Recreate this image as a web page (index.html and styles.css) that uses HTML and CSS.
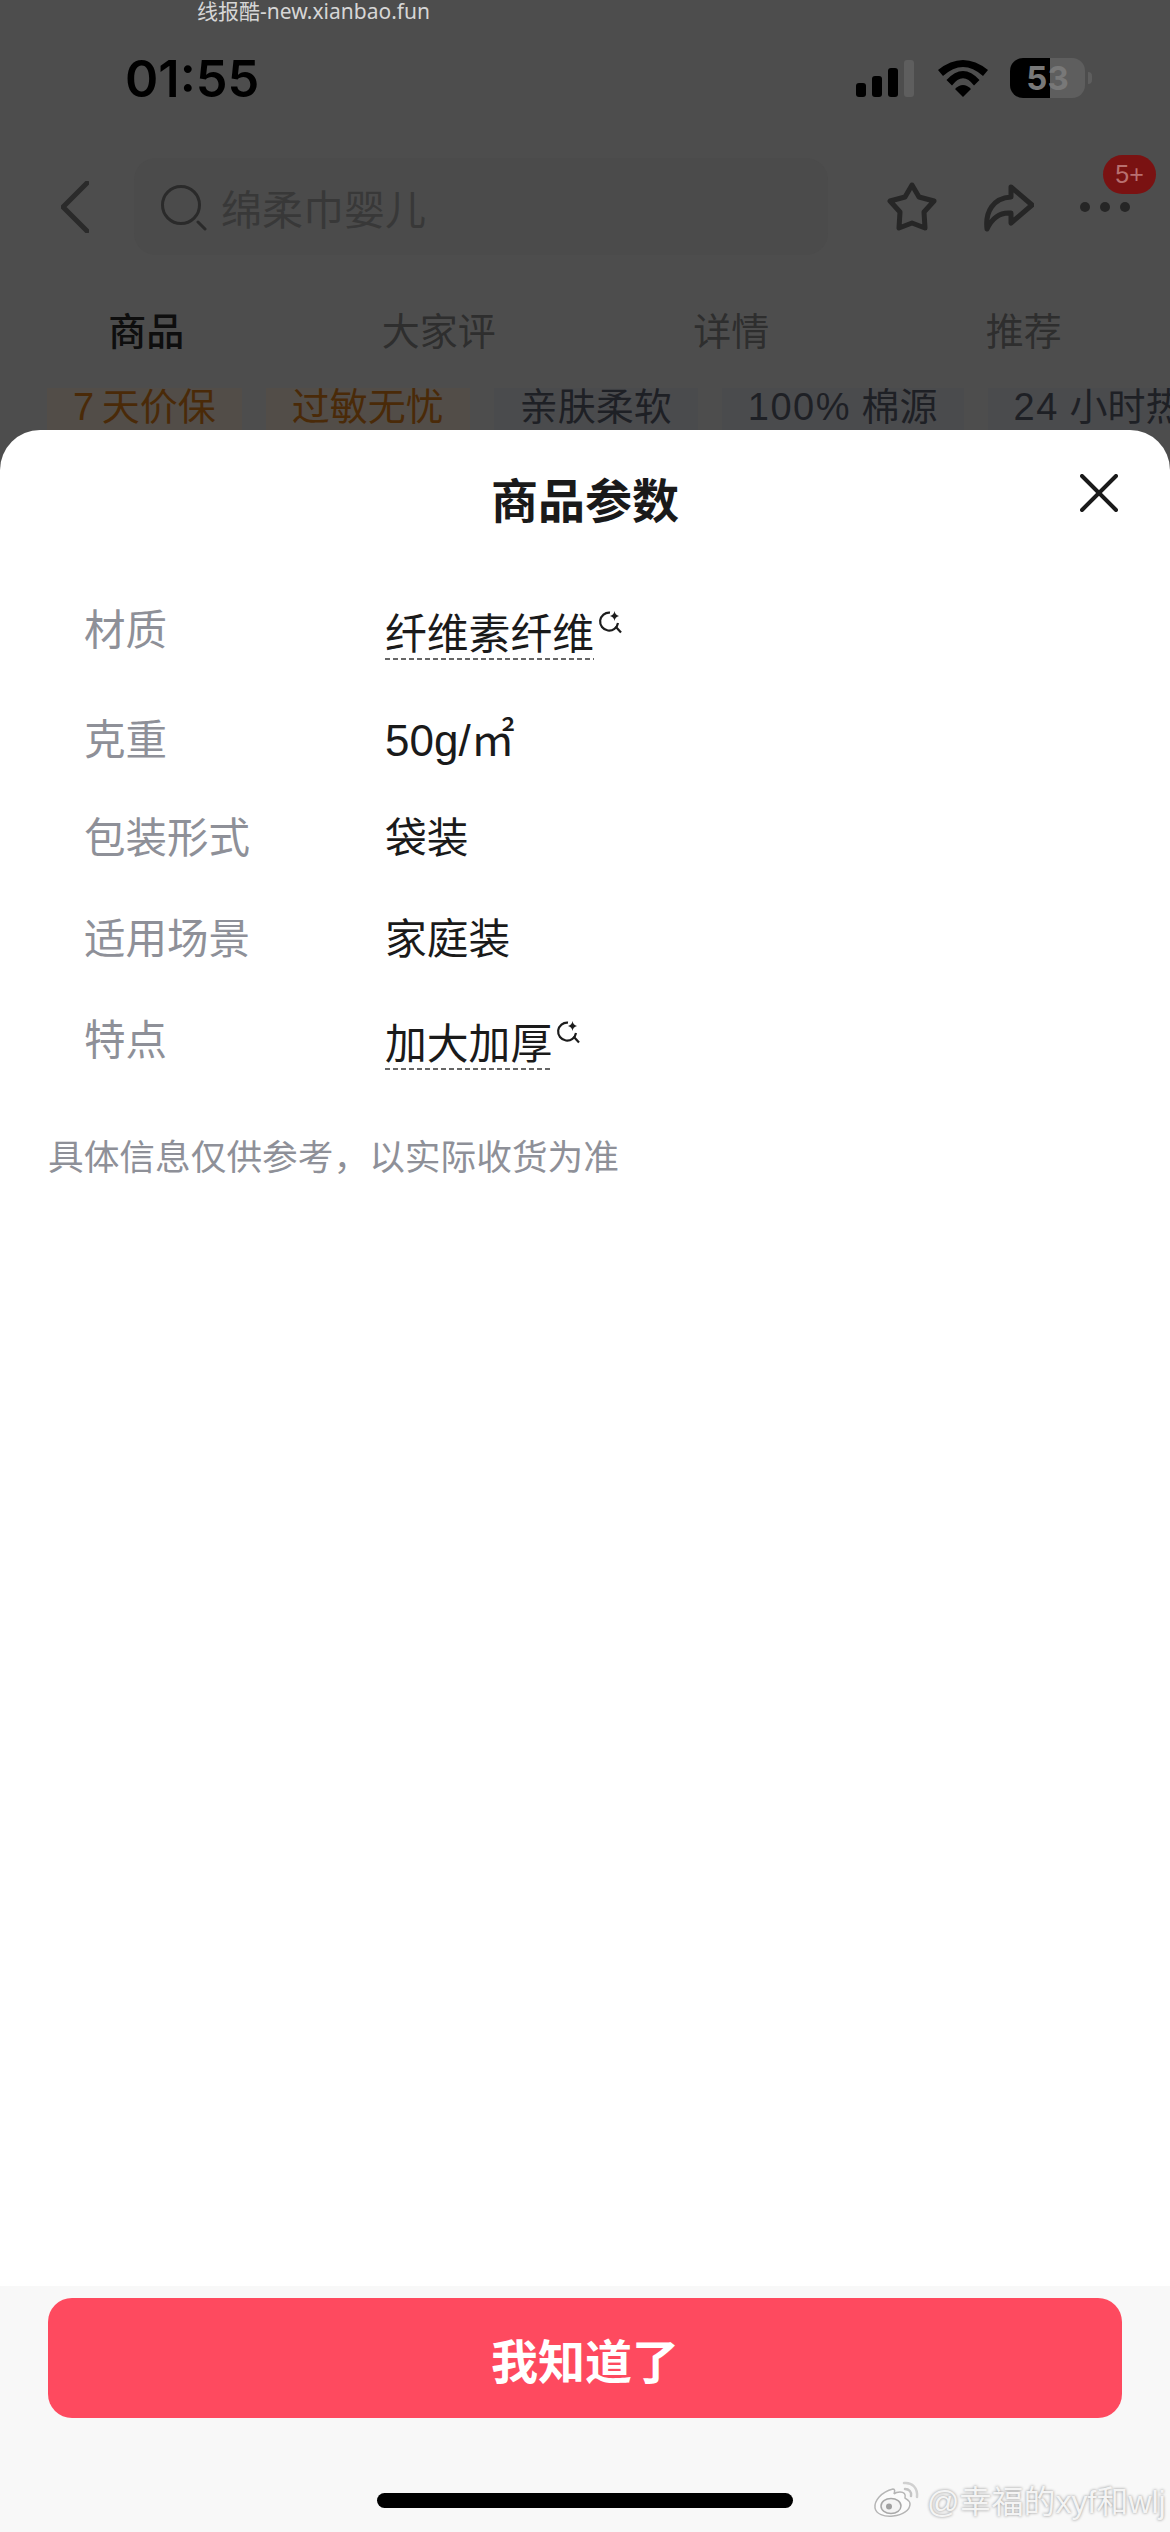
FILE: index.html
```html
<!DOCTYPE html>
<html>
<head>
    <title>商品参数</title>
    <link rel="stylesheet" href="styles.css">
</head>
<body>
    <svg class="defs" width="0" height="0">
        <symbol id="ai-search" viewBox="0 0 24 24">
            <path d="M12 2.6A9 9 0 1 0 20 13" fill="none" stroke="#1c1c1c" stroke-width="2.2"/>
            <path d="M17.5 16.5L23 22.5" fill="none" stroke="#1c1c1c" stroke-width="2.2"/>
            <path d="M16.5 1Q17 5 21 6Q17 7 16.5 11Q16 7 12 6Q16 5 16.5 1Z" fill="#1c1c1c"/>
        </symbol>
    </svg>

    <div class="backdrop">
        <div class="status-bar">
            <span class="time">01:55</span>
            <div class="status-icons">
                <div class="signal">
                    <i class="bar bar1"></i><i class="bar bar2"></i><i class="bar bar3"></i><i class="bar bar4"></i>
                </div>
                <svg class="wifi" width="50" height="37" viewBox="0 0 50 37">
                    <path d="M0 10Q25 -10 50 10L45 16Q25 -2 5 16Z"/>
                    <path d="M8.5 20Q25 2 41.5 20L36 25.500Q25 11 14 25.500Z"/>
                    <path d="M17 29Q25 21 33 29L25 37Z"/>
                </svg>
                <div class="battery">53</div>
            </div>
        </div>

        <div class="nav">
            <svg class="back" width="28" height="52" viewBox="0 0 28 52">
                <path d="M26 2L2 26L26 50" fill="none" stroke="#2a2a2a" stroke-width="5" stroke-linecap="round" stroke-linejoin="round"/>
            </svg>
            <div class="search">
                <svg class="search-icon" width="46" height="46" viewBox="0 0 46 46">
                    <circle cx="20" cy="20" r="18.500" fill="none" stroke="#2a2a2a" stroke-width="3"/>
                    <path d="M37 37L44 44" stroke="#2a2a2a" stroke-width="3" stroke-linecap="round"/>
                </svg>
                <span class="search-text">绵柔巾婴儿</span>
            </div>
            <svg class="star" width="50" height="50" viewBox="0 0 50 50">
                <path d="M25 3L32 15L47 19L37 30L38 46L25 41L12 46L13 30L3 19L18 15Z" fill="none" stroke="#262626" stroke-width="5" stroke-linejoin="round"/>
            </svg>
            <svg class="share" width="50" height="50" viewBox="0 0 50 50">
                <path d="M27 5L48 23L27 41L27 31C15 30 8 36 3 47C1 30 9 16 27 15Z" fill="none" stroke="#262626" stroke-width="5" stroke-linejoin="round"/>
            </svg>
            <div class="more">
                <i class="dot"></i><i class="dot"></i><i class="dot"></i>
                <span class="badge">5+</span>
            </div>
        </div>

        <div class="tabs">
            <span class="tab tab-active">商品</span>
            <span class="tab">大家评</span>
            <span class="tab">详情</span>
            <span class="tab">推荐</span>
        </div>

        <div class="tags">
            <span class="tag tag-warm">7&#8201;天价保</span>
            <span class="tag tag-warm">过敏无忧</span>
            <span class="tag">亲肤柔软</span>
            <span class="tag"><span class="tag-num">100%</span> 棉源</span>
            <span class="tag"><span class="tag-num">24</span> 小时热</span>
        </div>
    </div>

    <div class="sheet">
        <div class="sheet-header">
            <h1 class="sheet-title">商品参数</h1>
            <svg class="close" width="38" height="38" viewBox="0 0 38 38">
                <path d="M2 2L36 36M36 2L2 36" stroke="#1a1a1a" stroke-width="4" stroke-linecap="round"/>
            </svg>
        </div>

        <div class="params">
            <div class="param param-first">
                <span class="param-label">材质</span>
                <span class="param-value param-link">纤维素纤维<svg class="ai-icon" width="24" height="24"><use href="#ai-search"/></svg></span>
            </div>
            <div class="param param-short">
                <span class="param-label">克重</span>
                <span class="param-value param-unit">50g/㎡</span>
            </div>
            <div class="param">
                <span class="param-label">包装形式</span>
                <span class="param-value">袋装</span>
            </div>
            <div class="param">
                <span class="param-label">适用场景</span>
                <span class="param-value">家庭装</span>
            </div>
            <div class="param">
                <span class="param-label">特点</span>
                <span class="param-value param-link">加大加厚<svg class="ai-icon" width="24" height="24"><use href="#ai-search"/></svg></span>
            </div>
        </div>

        <p class="note">具体信息仅供参考，以实际收货为准</p>
    </div>

    <div class="footer">
        <button class="confirm">我知道了</button>
        <div class="home-bar"></div>
    </div>

    <!-- overlays burnt into the screenshot -->
    <span class="site-mark">线报酷-new.xianbao.fun</span>
    <div class="weibo-mark">
        <svg width="48" height="38" viewBox="0 0 48 38">
            <path d="M20 9C8 12 1 21 2 28C3 34 11 37 20 36C30 35 37 30 37 24C37 20 33 19 32 18C33 14 31 12 27 12C24 12 22 13 21 14C22 11 22 9 20 9Z" fill="#fbfbfb" stroke="#b5b5b5" stroke-width="1.500"/>
            <ellipse cx="18" cy="26" rx="10" ry="7.500" fill="#f4f4f4" stroke="#a8a8a8" stroke-width="1.500"/>
            <circle cx="16" cy="26.500" r="3" fill="#a0a0a0"/>
            <path d="M31 3C39 2 45 8 44 17" fill="none" stroke="#d0d0d0" stroke-width="2.500" stroke-linecap="round"/>
            <path d="M32 9C36 9 39 12 38 16" fill="none" stroke="#c4c4c4" stroke-width="2.500" stroke-linecap="round"/>
        </svg>
        <span class="weibo-name">@幸福的xyf和wlj</span>
    </div>
</body>
</html>
```

FILE: styles.css
```css
* {
    box-sizing: border-box;
}
html, body {
    margin: 0;
    padding: 0;
}
body {
    position: relative;
    width: 1170px;
    height: 2532px;
    overflow: hidden;
    display: flex;
    flex-direction: column;
    background: #4d4d4d;
    font-family: "Liberation Sans", "Noto Sans CJK SC", sans-serif;
}
.defs {
    position: absolute;
}

/* dimmed page behind the sheet */
.backdrop {
    height: 430px;
    overflow: hidden;
    flex-shrink: 0;
}
.status-bar {
    display: flex;
    align-items: center;
    height: 64px;
    margin-top: 46px;
    padding: 0 78px 0 125px;
}
.time {
    font-family: Inter, sans-serif;
    font-size: 50.500px;
    font-weight: 600;
    color: #000;
}
.status-icons {
    display: flex;
    align-items: center;
    margin-left: auto;
}
.signal {
    display: flex;
    align-items: flex-end;
    gap: 6px;
    height: 37px;
    margin-right: 24px;
}
.bar {
    display: block;
    width: 10px;
    border-radius: 3px;
    background: #000;
}
.bar1 { height: 14px; }
.bar2 { height: 21px; }
.bar3 { height: 29px; }
.bar4 { height: 37px; background: #5e5e5e; }
.wifi {
    margin-right: 22px;
}
.battery {
    position: relative;
    width: 75px;
    height: 40px;
    margin-right: 7px;
    border-radius: 13px;
    background: linear-gradient(90deg, #000 40px, #5e5e5e 40px);
    color: #787878;
    font-family: Inter, sans-serif;
    font-size: 33px;
    font-weight: 700;
    line-height: 40px;
    text-align: center;
}
.battery::after {
    content: "";
    position: absolute;
    left: 78px;
    top: 14px;
    width: 4px;
    height: 12px;
    border-radius: 0 4px 4px 0;
    background: #5e5e5e;
}

.nav {
    display: flex;
    align-items: center;
    height: 97px;
    margin-top: 48px;
    padding-left: 61px;
}
.back {
    flex-shrink: 0;
    margin-right: 45px;
}
.search {
    display: flex;
    align-items: center;
    width: 694px;
    height: 97px;
    margin-right: 59px;
    padding-left: 27px;
    border-radius: 22px;
    background: #4b4b4b;
}
.search-icon {
    margin: 3px 14px 0 0;
}
.search-text {
    font-size: 41px;
    color: #383838;
}
.star {
    margin-right: 47px;
}
.share {
    margin-right: 46px;
}
.more {
    position: relative;
    display: flex;
    gap: 10px;
}
.dot {
    display: block;
    width: 10px;
    height: 10px;
    border-radius: 50%;
    background: #262626;
}
.badge {
    position: absolute;
    left: 23px;
    top: -47px;
    width: 53px;
    height: 39px;
    border-radius: 20px;
    background: #7a1212;
    color: #b87070;
    font-size: 25px;
    line-height: 39px;
    text-align: center;
}

.tabs {
    display: grid;
    grid-template-columns: repeat(4, 1fr);
    margin-top: 47px;
    height: 60px;
}
.tab {
    font-size: 38px;
    line-height: 60px;
    text-align: center;
    color: #2e2e2e;
}
.tab-active {
    font-weight: 500;
    color: #0e0e0e;
}

.tags {
    display: flex;
    gap: 24px;
    margin-top: 26px;
    padding-left: 47px;
    white-space: nowrap;
}
.tag {
    flex-shrink: 0;
    height: 42px;
    padding: 0 26px;
    background: #4a4b4d;
    color: #1e2025;
    font-size: 38px;
    line-height: 38px;
}
.tag-warm {
    background: #524d48;
    color: #4a2a08;
}
.tag-num {
    letter-spacing: 1.500px;
}

/* bottom sheet */
.sheet {
    flex: 1;
    border-radius: 40px 40px 0 0;
    background: #fff;
}
.sheet-header {
    position: relative;
    height: 142px;
}
.sheet-title {
    margin: 0;
    font-size: 47px;
    font-weight: 700;
    line-height: 144px;
    text-align: center;
    color: #1a1a1a;
}
.close {
    position: absolute;
    left: 1080px;
    top: 44px;
}
.params {
    padding: 29px 0 0 84px;
}
.param {
    display: flex;
    align-items: flex-start;
    height: 101px;
}
.param-first {
    height: 110px;
}
.param-short {
    height: 98px;
}
.param-label {
    width: 301px;
    font-size: 41.500px;
    line-height: 60px;
    color: #8e9098;
}
.param-value {
    font-size: 41.800px;
    line-height: 60px;
    color: #1a1a1a;
}
.param-unit {
    font-size: 44px;
}
.param-link {
    position: relative;
    margin-top: 9px;
    line-height: 50px;
    background: repeating-linear-gradient(90deg, #666 0 5px, transparent 5px 8px) left 48px / 100% 2px no-repeat;
}
.ai-icon {
    position: absolute;
    left: 100%;
    top: 0;
    margin-left: 4px;
}
.note {
    margin: 0;
    padding: 21px 0 0 48px;
    font-size: 35.700px;
    line-height: 50px;
    color: #8e9098;
}

.footer {
    flex-shrink: 0;
    height: 246px;
    padding: 12px 48px 0;
    background: #f8f8f8;
}
.confirm {
    display: block;
    width: 100%;
    height: 120px;
    padding: 0;
    border: none;
    border-radius: 24px;
    background: #fe4a5f;
    color: #fff;
    font-family: inherit;
    font-size: 47px;
    font-weight: 700;
}
.home-bar {
    width: 416px;
    height: 15px;
    margin: 75px auto 0;
    border-radius: 8px;
    background: #000;
}

/* watermarks */
.site-mark {
    position: absolute;
    left: 197px;
    top: -2px;
    font-family: "Noto Sans", "Noto Sans CJK SC", sans-serif;
    font-size: 21px;
    line-height: 26px;
    color: #d6d6d6;
}
.weibo-mark {
    position: absolute;
    left: 873px;
    top: 2479px;
    display: flex;
    align-items: center;
    gap: 6px;
    height: 40px;
    white-space: nowrap;
}
.weibo-name {
    font-size: 32px;
    color: #f4f4f4;
    text-shadow: 0 0 3px #8a8a8a;
}
```
